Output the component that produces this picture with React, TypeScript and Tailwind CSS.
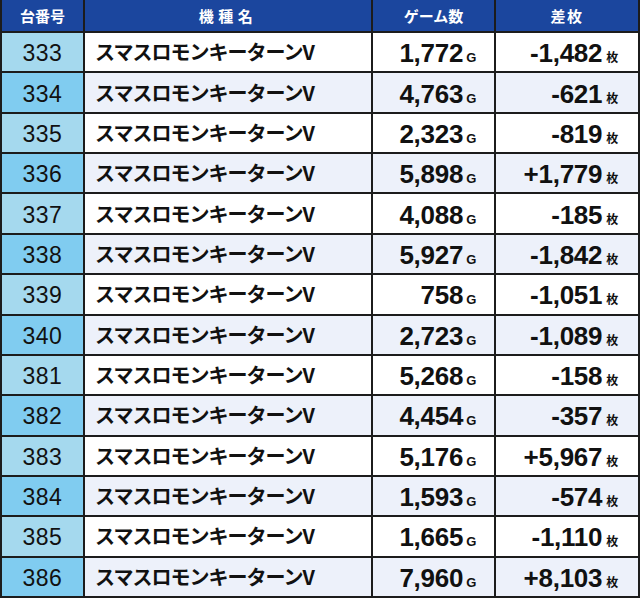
import React from 'react';

const rows = [
  ['333', '1,772', '-1,482'],
  ['334', '4,763', '-621'],
  ['335', '2,323', '-819'],
  ['336', '5,898', '+1,779'],
  ['337', '4,088', '-185'],
  ['338', '5,927', '-1,842'],
  ['339', '758', '-1,051'],
  ['340', '2,723', '-1,089'],
  ['381', '5,268', '-158'],
  ['382', '4,454', '-357'],
  ['383', '5,176', '+5,967'],
  ['384', '1,593', '-574'],
  ['385', '1,665', '-1,110'],
  ['386', '7,960', '+8,103'],
];

const jp = { fontFamily: '"Noto Sans CJK JP", sans-serif' };
const num = { fontFamily: '"Liberation Sans", Arial, sans-serif' };

export default function App() {
  return (
    <div
      className="grid h-[598px] w-[640px] grid-cols-[81px_286px_121px_142px] grid-rows-[31px_repeat(14,minmax(0,1fr))] gap-[2px] overflow-hidden bg-[#1c1c1c] px-[2px] pb-[2px] leading-none"
      style={jp}
    >
      <div className="flex items-center justify-center bg-[#1b469e] text-[15px] font-bold text-white">台番号</div>
      <div className="flex items-center justify-center bg-[#1b469e] text-[15px] font-bold tracking-[0.3em] text-white">機種名</div>
      <div className="flex items-center justify-center bg-[#1b469e] text-[15px] font-bold text-white">ゲーム数</div>
      <div className="flex items-center justify-center bg-[#1b469e] text-[15px] font-bold tracking-[0.1em] text-white">差枚</div>

      {rows.map(([no, games, diff], i) => {
        const even = i % 2 === 1;
        const cell = even ? 'bg-[#edf1fa]' : 'bg-white';
        return (
          <React.Fragment key={no}>
            <div
              className={`flex items-center justify-center pt-[3px] text-[23px] tracking-[0.02em] text-[#111] ${even ? 'bg-[#80ccf0]' : 'bg-[#a5d9ee]'}`}
              style={num}
            >
              {no}
            </div>
            <div className={`flex items-center pl-[10px] text-[20px] font-bold tracking-[-0.05em] text-[#111] ${cell}`}>
              スマスロモンキーターンV
            </div>
            <div className={`flex items-center justify-end pr-[18px] pt-[2px] ${cell}`} style={num}>
              <span className="text-[26px] font-bold tracking-[-0.01em] text-[#111]">
                {games}
                <span className="ml-[3px] text-[13px]">G</span>
              </span>
            </div>
            <div className={`flex items-center justify-end pr-[20px] pt-[2px] ${cell}`}>
              <span className="text-[26px] font-bold tracking-[-0.01em] text-[#111]" style={num}>
                {diff}
                <span className="ml-[4px] text-[12px]" style={jp}>枚</span>
              </span>
            </div>
          </React.Fragment>
        );
      })}
    </div>
  );
}
